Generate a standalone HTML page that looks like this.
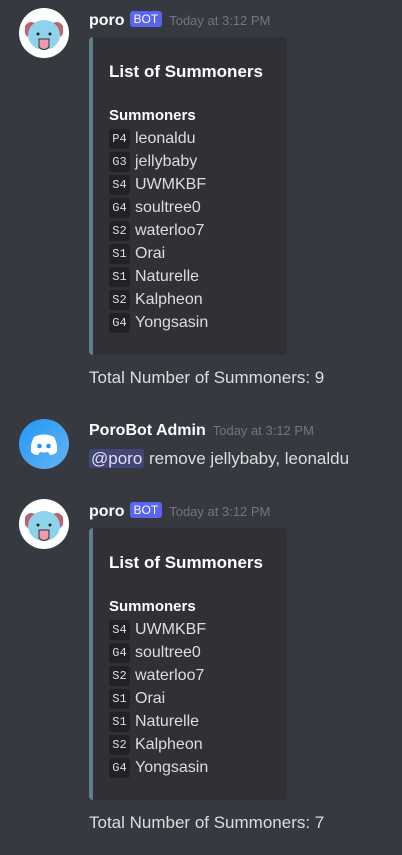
<!DOCTYPE html>
<html><head><meta charset="utf-8"><style>
body{margin:0;width:402px;height:855px;background:#36393f;font-family:"Liberation Sans",sans-serif;position:relative;overflow:hidden;color:#dcddde}
.a{position:absolute}
.name{font-size:16px;font-weight:bold;color:#fff}
.bot{display:inline-block;background:#5865f2;color:#fff;font-size:12px;padding:1px 4px;border-radius:3px;vertical-align:2px;margin-left:5px}
.ts{font-size:13px;color:#72767d;margin-left:7px}
.embed{position:absolute;left:89px;width:198px;background:#2f3136;border-left:4px solid #607d8b;border-radius:4px;box-sizing:border-box}
.title{position:absolute;left:16px;font-size:17px;font-weight:bold;color:#fff}
.sub{position:absolute;left:16px;font-size:15px;font-weight:bold;color:#fff}
.row{position:absolute;left:16px;font-size:16px;color:#dcddde;height:20px;line-height:20px;white-space:nowrap}
.row code{display:inline-block;background:#202225;font-family:"Liberation Mono",monospace;font-size:12px;width:21px;text-align:center;border-radius:3px;margin-right:5px;color:#dcddde;height:20px;line-height:20px;vertical-align:top}
.total{font-size:17px;color:#dcddde;left:89px}
</style></head><body>

<svg class="a" style="left:19px;top:8px" width="50" height="50" viewBox="0 0 50 50">
<circle cx="25" cy="25" r="25" fill="#fff"/>
<path d="M6 18 q4-6 10-3 l-2 14 q-6 2-8-4z" fill="#c0606f"/>
<path d="M44 18 q-4-6-10-3 l2 14 q6 2 8-4z" fill="#c0606f"/>
<ellipse cx="25" cy="27" rx="16" ry="15" fill="#8ed3ec"/>
<circle cx="19" cy="26" r="1.5" fill="#222"/><circle cx="31" cy="26" r="1.5" fill="#222"/>
<path d="M20 31 h10 v8 q-5 5-10 0z" fill="#f09aa8" stroke="#333" stroke-width="1"/>
</svg>
<div class="a" style="left:89px;top:11px"><span class="name">poro</span><span class="bot">BOT</span><span class="ts">Today at 3:12 PM</span></div>
<div class="embed" style="top:37px;height:318px">
<div class="title" style="top:25px">List of Summoners</div>
<div class="sub" style="top:70px">Summoners</div>
<div class="row" style="top:92px"><code>P4</code>leonaldu</div>
<div class="row" style="top:115px"><code>G3</code>jellybaby</div>
<div class="row" style="top:138px"><code>S4</code>UWMKBF</div>
<div class="row" style="top:161px"><code>G4</code>soultree0</div>
<div class="row" style="top:184px"><code>S2</code>waterloo7</div>
<div class="row" style="top:207px"><code>S1</code>Orai</div>
<div class="row" style="top:230px"><code>S1</code>Naturelle</div>
<div class="row" style="top:253px"><code>S2</code>Kalpheon</div>
<div class="row" style="top:276px"><code>G4</code>Yongsasin</div>
</div>
<div class="a total" style="top:368px">Total Number of Summoners: 9</div>

<svg class="a" style="left:19px;top:419px" width="50" height="50" viewBox="0 0 50 50">
<defs><linearGradient id="g" x1="0" y1="0" x2="1" y2="1"><stop offset="0" stop-color="#2196f3"/><stop offset="1" stop-color="#64b5f6"/></linearGradient></defs>
<circle cx="25" cy="25" r="25" fill="url(#g)"/>
<path d="M15 18 q10-5 20 0 q4 7 3 15 q-3 3-7 3 l-2-3 q-4 1-8 0 l-2 3 q-4 0-7-3 q-1-8 3-15z" fill="#fff"/>
<circle cx="20.5" cy="27" r="2.3" fill="#2196f3"/><circle cx="29.5" cy="27" r="2.3" fill="#2196f3"/>
</svg>
<div class="a" style="left:89px;top:422px"><span class="name">PoroBot Admin</span><span class="ts">Today at 3:12 PM</span></div>
<div class="a" style="left:89px;top:449px;font-size:17px;white-space:nowrap"><span style="background:#414675;color:#dee0fc;border-radius:3px;padding:0 2px">@poro</span> remove jellybaby, leonaldu</div>

<svg class="a" style="left:19px;top:499px" width="50" height="50" viewBox="0 0 50 50">
<circle cx="25" cy="25" r="25" fill="#fff"/>
<path d="M6 18 q4-6 10-3 l-2 14 q-6 2-8-4z" fill="#c0606f"/>
<path d="M44 18 q-4-6-10-3 l2 14 q6 2 8-4z" fill="#c0606f"/>
<ellipse cx="25" cy="27" rx="16" ry="15" fill="#8ed3ec"/>
<circle cx="19" cy="26" r="1.5" fill="#222"/><circle cx="31" cy="26" r="1.5" fill="#222"/>
<path d="M20 31 h10 v8 q-5 5-10 0z" fill="#f09aa8" stroke="#333" stroke-width="1"/>
</svg>
<div class="a" style="left:89px;top:502px"><span class="name">poro</span><span class="bot">BOT</span><span class="ts">Today at 3:12 PM</span></div>
<div class="embed" style="top:528px;height:272px">
<div class="title" style="top:25px">List of Summoners</div>
<div class="sub" style="top:70px">Summoners</div>
<div class="row" style="top:92px"><code>S4</code>UWMKBF</div>
<div class="row" style="top:115px"><code>G4</code>soultree0</div>
<div class="row" style="top:138px"><code>S2</code>waterloo7</div>
<div class="row" style="top:161px"><code>S1</code>Orai</div>
<div class="row" style="top:184px"><code>S1</code>Naturelle</div>
<div class="row" style="top:207px"><code>S2</code>Kalpheon</div>
<div class="row" style="top:230px"><code>G4</code>Yongsasin</div>
</div>
<div class="a total" style="top:813px">Total Number of Summoners: 7</div>
</body></html>
